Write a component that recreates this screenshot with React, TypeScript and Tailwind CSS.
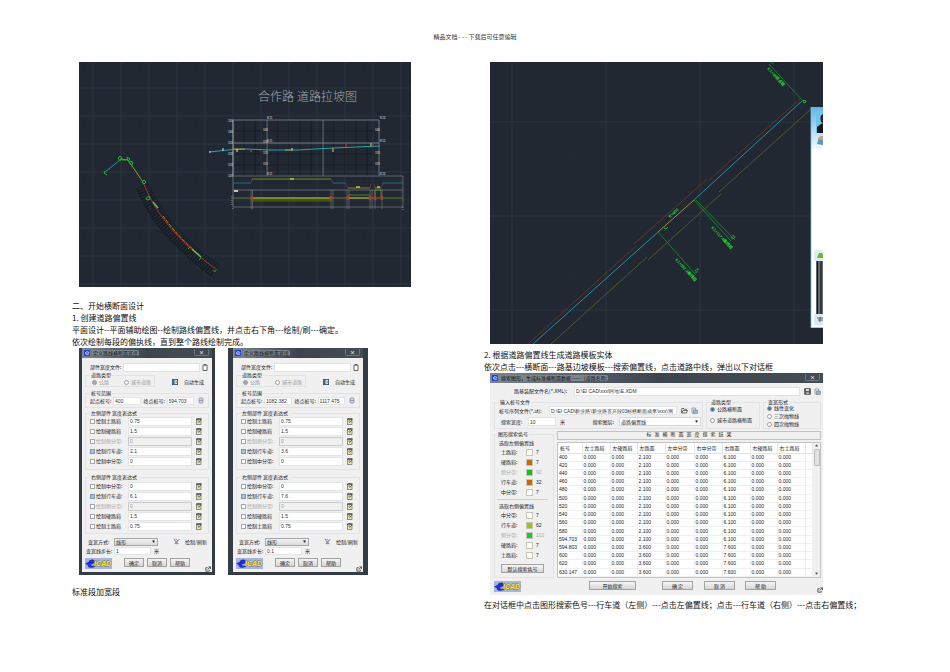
import { useId } from "react";
import type { ReactNode } from "react";

type Part = { label: string; value: string; checked?: boolean; disabled?: boolean };

type WidthSettings = {
  name: string;
  start: string;
  end: string;
  step: string;
  left: Part[];
  right: Part[];
  wideFrame?: boolean;
};

const standardSection: WidthSettings = {
  name: "standard",
  start: "400",
  end: "594.703",
  step: "1",
  left: [
    { label: "绘制土路肩", value: "0.75" },
    { label: "绘制硬路肩", value: "1.5" },
    { label: "绘制侧分带:", value: "0", disabled: true },
    { label: "绘制行车道:", value: "2.1", checked: true },
    { label: "绘制中分带:", value: "0" },
  ],
  right: [
    { label: "绘制中分带:", value: "0" },
    { label: "绘制行车道:", value: "6.1", checked: true },
    { label: "绘制侧分带:", value: "0", disabled: true },
    { label: "绘制硬路肩", value: "1.5" },
    { label: "绘制土路肩", value: "0.75" },
  ],
};

const widenedSection: WidthSettings = {
  name: "widened",
  start: "1082.382",
  end: "1117.475",
  step: "0.1",
  wideFrame: true,
  left: [
    { label: "绘制土路肩", value: "0.75" },
    { label: "绘制硬路肩", value: "1.5" },
    { label: "绘制侧分带:", value: "0", disabled: true },
    { label: "绘制行车道:", value: "3.6", checked: true },
    { label: "绘制中分带:", value: "0" },
  ],
  right: [
    { label: "绘制中分带:", value: "0" },
    { label: "绘制行车道:", value: "7.6", checked: true },
    { label: "绘制侧分带:", value: "0", disabled: true },
    { label: "绘制硬路肩", value: "1.5" },
    { label: "绘制土路肩", value: "0.75" },
  ],
};

const resultColumns = [
  { label: "桩号", width: "w-[24px]" },
  { label: "左土路肩", width: "w-[28px]" },
  { label: "左硬路肩", width: "w-[27px]" },
  { label: "左路面", width: "w-[28px]" },
  { label: "左中分带", width: "w-[29px]" },
  { label: "右中分带", width: "w-[28px]" },
  { label: "右路面", width: "w-[28px]" },
  { label: "右硬路肩", width: "w-[27px]" },
  { label: "右土路肩", width: "w-[28px]" },
  { label: "", width: "" },
];

const stations = [
  "400",
  "420",
  "440",
  "460",
  "480",
  "500",
  "520",
  "540",
  "560",
  "580",
  "594.703",
  "594.803",
  "600",
  "620",
  "630.147",
];

const resultRows = stations.map((station, i) => {
  const leftLane = i < 11 ? "2.100" : "3.600";
  const rightLane = i < 11 ? "6.100" : "7.600";
  return [station, "0.000", "0.000", leftLane, "0.000", "0.000", rightLane, "0.000", "0.000", ""];
});

const leftColours = [
  { label: "土路肩:", colour: "bg-white", index: "7" },
  { label: "硬路肩:", colour: "bg-[#c8690c]", index: "7" },
  { label: "侧分带:", colour: "bg-[#12c312]", index: "92", disabled: true },
  { label: "行车道:", colour: "bg-[#c8690c]", index: "32" },
  { label: "中分带:", colour: "bg-white", index: "7" },
];

const rightColours = [
  { label: "中分带:", colour: "bg-white", index: "7" },
  { label: "行车道:", colour: "bg-[#98c80f]", index: "62" },
  { label: "侧分带:", colour: "bg-[#10cc3c]", index: "102", disabled: true },
  { label: "硬路肩:", colour: "bg-white", index: "7" },
  { label: "土路肩:", colour: "bg-white", index: "7" },
];

const steps = (from: number, to: number, by: number) => {
  const out: number[] = [];
  for (let n = from; n <= to; n += by) out.push(n);
  return out;
};

function CadGrid({
  width,
  height,
  x,
  y,
  pitch,
}: {
  width: number;
  height: number;
  x: number;
  y: number;
  pitch: number;
}) {
  const minor = pitch / 5;
  return (
    <>
      <rect width={width} height={height} fill="#212832" />
      <g stroke="#252c37" strokeWidth="0.6">
        {steps(x - pitch, width, minor).map((n) => (
          <path key={n} d={`M${n} 0V${height}`} />
        ))}
        {steps(y - pitch, height, minor).map((n) => (
          <path key={n} d={`M0 ${n}H${width}`} />
        ))}
      </g>
      <g stroke="#2d3542" strokeWidth="0.9">
        {steps(x, width, pitch).map((n) => (
          <path key={n} d={`M${n} 0V${height}`} />
        ))}
        {steps(y, height, pitch).map((n) => (
          <path key={n} d={`M0 ${n}H${width}`} />
        ))}
      </g>
    </>
  );
}

function ProfileDrawing() {
  const road = "M64 120C76 150 96 177 138 208";
  return (
    <svg viewBox="0 0 332 225" className="block w-full" role="img" aria-label="合作路 道路拉坡图" fill="none">
      <CadGrid width={332} height={225} x={14} y={26} pitch={28} />
      <g fill="#a3a8ae" fontSize="12" fontWeight="300" fontFamily="'Noto Sans CJK SC', sans-serif">
        <text x="179" y="39">合作路</text>
        <text x="218" y="39">道路拉坡图</text>
      </g>

      {/* plan view of the road */}
      <path d="M26 110L41 98" stroke="#2794a0" />
      <path d="M41 97L49 98L64 120" stroke="#8f9a35" />
      <path d="M63 124C75 154 95 178 136 210" stroke="#11161c" strokeWidth="12" strokeDasharray="1.2 1.6" opacity="0.75" />
      <path d="M58 127C71 158 92 184 133 214M68 119C80 146 100 174 141 204" stroke="#12171d" strokeWidth="0.7" />
      <path d={road} stroke="#a83225" strokeWidth="1" />
      <path d="M84 154C92 165 102 177 115 188" stroke="#c47724" strokeWidth="1" strokeDasharray="4 1" />
      <path d="M74 140L79 146M113 187L122 195" stroke="#68b457" strokeWidth="1.6" />
      <g stroke="#13ba26" strokeWidth="1">
        <path d="M26 109L25 111L28 113M39 96L41 94L43 96L41 99ZM43 98H47M48 95L51 97L49 99ZM51 99L54 100L53 103L50 101ZM63 120L65 118L67 120L65 122ZM67 136L70 134L71 137L68 138ZM109 187L111 185M120 198L122 196M134 209L137 209" />
      </g>

      {/* longitudinal profile */}
      <g stroke="#12181e" strokeWidth="0.7">
        {steps(165, 299, 11.2).map((n) => (
          <path key={n} d={`M${n} 59V114`} />
        ))}
        <path d="M155 69H300M155 92H300M155 103H300" />
      </g>
      <g stroke="#737a82" strokeWidth="0.9">
        <path d="M154 58H300V114M188 58V114M244 58V114" />
        <path d="M154 81H300" strokeWidth="1.4" opacity="0.7" />
        <path d="M154 58V114" strokeWidth="1.7" />
        <path d="M154 114H324V145H154ZM154 128H324" opacity="0.8" />
        <path d="M172 128V147M173.500 128V147M252 128V147M254 128V147M268 128V147M270 128V147M291 128V147M293 128V147M296 128V147M303 128V147" opacity="0.7" />
      </g>
      <path d="M130 90L154 87.500L168 87L191 88H218L254 86L301 84" stroke="#23a5ad" strokeWidth="1" />
      <path d="M154 87H166M206 88H214" stroke="#a9a337" strokeWidth="1" />
      <g fill="#a9afb5" fontSize="3" fontWeight="700" fontFamily="'Liberation Sans', sans-serif">
        <text x="149" y="60">320</text>
        <text x="149" y="71">340</text>
        <text x="149" y="82">330</text>
        <text x="149" y="93">335</text>
        <text x="149" y="104">330</text>
        <text x="149" y="115">320</text>
        <text x="184" y="69">340</text>
        <text x="184" y="81">330</text>
        <text x="184" y="92">335</text>
        <text x="184" y="103">330</text>
        <text x="296" y="69">340</text>
        <text x="296" y="92">335</text>
        <text x="296" y="103">330</text>
        <text x="188" y="57">K11</text>
        <text x="188" y="80">K11</text>
        <text x="188" y="113">K11</text>
        <text x="301" y="57">K12</text>
        <text x="301" y="80">K12</text>
        <text x="301" y="113">K12</text>
      </g>
      <path d="M130 90H132M144 86V89M158 87V90M213 86V88" stroke="#c9cdd0" strokeWidth="1.2" />
      <path d="M171 89H173M267 82V85M294 81V84" stroke="#bb2e35" strokeWidth="1.4" />
      <path d="M254 86V90M292 81V84" stroke="#c2bb2b" strokeWidth="1.2" />
      <path d="M154 121H172M254 121H267M303 121H324" stroke="#1d8790" strokeWidth="0.8" />
      <path d="M172 121L173 117M254 121L252 117M267 122L269 126M292 122L291 126M295 122L296 126M304 122L302 126" stroke="#8e2c68" strokeWidth="0.7" />
      <path d="M173 117H252M269 126H291M296 126H302" stroke="#8a8c26" strokeWidth="0.9" />
      <path d="M211 117H215M277 125H281M298 125H301" stroke="#c5c529" strokeWidth="1.6" />
      <path d="M154 136H324" stroke="#6b9328" strokeWidth="0.8" />
      <path d="M173 137H252V139H173Z" fill="#33430f" stroke="#61851e" strokeWidth="0.6" />
      <path d="M173 136H252M269 136H291" stroke="#b2b338" strokeWidth="1" />
      <path d="M269 133H291M296 136V128H302V136" stroke="#5a9420" strokeWidth="0.8" />
      <path d="M173 134V138M252 134V138M269 134V138M291 134V138M296 134V138M303 134V138" stroke="#b7352c" strokeWidth="2.4" />
      <path d="M155 129H159" stroke="#fff" strokeWidth="1.4" />
      <path d="M153 134V143M154 146V148M324 145V148" stroke="#888e94" strokeWidth="1" strokeDasharray="1 1" />
    </svg>
  );
}

function OffsetDrawing() {
  return (
    <svg viewBox="0 0 333 282" className="block w-full" role="img" aria-label="道路偏置线" fill="none">
      <defs>
        <linearGradient id="sky" x1="0" y1="0" x2="0" y2="1">
          <stop offset="0" stopColor="#5fb4e8" />
          <stop offset="1" stopColor="#f4fafe" />
        </linearGradient>
      </defs>
      <CadGrid width={333} height={282} x={22} y={60} pitch={94} />
      <path d="M311 36L218 119M217 117L144 182M146 184L38 282" stroke="#6f3a2c" strokeWidth="0.8" />
      <path d="M321 47L229 130M231 132L158 198M157 195L61 282" stroke="#59642a" strokeWidth="0.8" />
      <path d="M313 38L204 138M168 170L43 282" stroke="#2390a0" strokeWidth="1" />
      <path d="M204 138L168 170" stroke="#a18c3e" strokeWidth="1" />
      <path d="M279 2L313 39M204 138L241 179M206 138L245 178M168 170L206 213M280 0L284 2" stroke="#17842b" strokeWidth="0.9" />
      <g stroke="#20b52f" strokeWidth="1">
        <path d="M313 39L315 38L316 40L314 41Z" />
        <path d="M174 166L176 167L178 165" />
      </g>
      <g fill="#1fd035" fontSize="4" fontWeight="700" fontFamily="'Liberation Sans', 'Noto Sans CJK SC', sans-serif">
        <text transform="translate(180 156) rotate(-42)">R=650</text>
        <text transform="translate(277 7) rotate(47)">
          K1+48<tspan fontWeight="900">终点桩</tspan>
        </text>
        <text transform="translate(221 166) rotate(47)">
          K1+117.4<tspan fontWeight="900">曲线段</tspan>
        </text>
        <text transform="translate(185 198) rotate(47)">
          K1+082.3<tspan fontWeight="900">曲线段</tspan>
        </text>
        <text transform="translate(242 178) rotate(-42)">YZ</text>
        <text transform="translate(206 211) rotate(-42)">ZY</text>
      </g>

      {/* chat window docked at the right edge */}
      <rect x="321" y="45" width="12" height="221" fill="#fff" />
      <rect x="321" y="45" width="12" height="42" fill="url(#sky)" />
      <path d="M321 45V265.500H333" stroke="#7fc0dc" strokeWidth="0.8" />
      <rect x="326" y="49" width="7" height="22" fill="#69c4ee" />
      <path d="M327 71V65L331 62L333 61V71Z" fill="#15181c" />
      <path d="M333 52C330 53 330 57 331 60L333 61Z" fill="#30241f" />
      <path d="M327 82L329 75L333 74V83Z" fill="#5c96cf" />
      <path d="M328 77L331 74L333 75V78Z" fill="#e5a35b" />
      <rect x="324" y="188" width="9" height="11" fill="#dcedf5" />
      <path d="M327 196L329 191H332L333 193V196Z" fill="#73b731" />
      <rect x="326" y="199" width="7" height="53" fill="#6a6e73" />
      <path d="M327.500 199V252M331 199V252" stroke="#15181b" strokeWidth="1.2" />
      <rect x="324" y="252" width="9" height="11" fill="#d9ebf4" />
      <path d="M327 256H333M328 258H333M330 255V260" stroke="#4b5157" strokeWidth="0.9" />
    </svg>
  );
}

function AppLogo() {
  return (
    <svg viewBox="0 0 27 11" className="h-[11px] w-[27px]" role="img" aria-label="EICAD">
      <rect width="27" height="11" fill="#aab4da" />
      <path d="M0 5.500L3.500 4C4 1 9.500 0.500 9.500 3.500C9.500 6 6.500 6.500 5.500 6.500C6 8 8 8 10 7.500V9C6 10.500 3 10 2.500 7Z" fill="#1c2ed4" />
      <text
        x="9"
        y="8"
        fontSize="7"
        fontWeight="700"
        fontStyle="italic"
        fontFamily="'Liberation Sans', sans-serif"
        fill="#fdf02a"
        stroke="#6c6a52"
        strokeWidth="0.8"
        paintOrder="stroke"
      >
        ICAD
      </text>
    </svg>
  );
}

function EMark() {
  return (
    <svg viewBox="0 0 6 6" className="size-[6px] shrink-0" aria-hidden="true">
      <rect width="6" height="6" rx="1" fill="#1f3cf0" />
      <path d="M1 3H5C5 1 1.500 1 1.500 3C1.500 5 4 5 5 4" stroke="#dfe5ff" strokeWidth="0.7" fill="none" />
    </svg>
  );
}

function PickIcon() {
  return (
    <svg viewBox="0 0 6 7" className="h-[7px] w-[6px]" aria-hidden="true">
      <rect x="0.500" y="1" width="4.500" height="5.500" fill="#e9e7b5" stroke="#4a514c" strokeWidth="0.6" />
      <path d="M0.500 1H5.500" stroke="#222" strokeWidth="1" />
      <path d="M4.800 2L2.500 4.800M1.500 3H3" stroke="#333" strokeWidth="0.7" />
    </svg>
  );
}

function PageIcon() {
  return (
    <svg viewBox="0 0 6 7" className="h-[7px] w-[6px]" aria-hidden="true">
      <path d="M1 1H5V6.500H1Z" fill="#fafafa" stroke="#444" strokeWidth="0.8" />
      <path d="M2 0.800H4" stroke="#444" />
    </svg>
  );
}

function ArchiveIcon() {
  return (
    <svg viewBox="0 0 6 7" className="h-[7px] w-[6px]" aria-hidden="true">
      <path d="M1 1.500C2 0.500 4 0.500 5 1.500V5.500C4 6.500 2 6.500 1 5.500Z" fill="#d0d2e5" stroke="#8485a4" strokeWidth="0.7" />
      <path d="M1 3.500H5" stroke="#8485a4" strokeWidth="0.7" />
    </svg>
  );
}

function AutoIcon() {
  return (
    <svg viewBox="0 0 7 7" className="size-[6px]" aria-hidden="true">
      <rect x="0.500" y="0.500" width="6" height="6" fill="#dbe6f0" stroke="#35506e" />
      <path d="M1 1H3V6H1Z" fill="#3d6c9d" />
      <path d="M4 2L5.500 3.500L4 5" stroke="#b3731d" fill="none" />
    </svg>
  );
}

function BrushIcon() {
  return (
    <svg viewBox="0 0 8 8" className="size-[7px]" aria-hidden="true">
      <path d="M1 1L4 5M4 5L7 1.500M3 1L5 3" stroke="#4a53c4" strokeWidth="0.9" />
      <path d="M2 6L4 4.500L6 6.500H3Z" fill="#b0ad4a" stroke="#555" strokeWidth="0.5" />
    </svg>
  );
}

function CornerIcon() {
  return (
    <svg viewBox="0 0 7 7" className="size-[6px]" aria-hidden="true">
      <path d="M3 2H1V6H5V4.500M3 4L6 1.500M4 1H6.500V3.500" stroke="#333" strokeWidth="0.9" fill="none" />
    </svg>
  );
}

function SaveIcon() {
  return (
    <svg viewBox="0 0 7 7" className="size-[7px]" aria-hidden="true">
      <rect x="0.700" y="0.700" width="5.600" height="5.600" fill="#5c5c52" stroke="#333" strokeWidth="0.6" />
      <rect x="2" y="1" width="3" height="2" fill="#d8d8d0" />
      <rect x="2" y="4.200" width="3" height="2" fill="#aaa" />
    </svg>
  );
}

function LockIcon() {
  return (
    <svg viewBox="0 0 7 7" className="size-[7px]" aria-hidden="true">
      <path d="M1 1H4.500V6H1Z" fill="#e8edf2" stroke="#7b8794" strokeWidth="0.7" />
      <rect x="2.500" y="3" width="4" height="3.500" fill="#9fb0c2" stroke="#677687" strokeWidth="0.5" />
    </svg>
  );
}

function OpenIcon() {
  return (
    <svg viewBox="0 0 7 7" className="size-[7px]" aria-hidden="true">
      <path d="M0.700 6V1.500H3L3.500 2.300H5.500V3.500M0.700 6L2 3.500H6.500L5.500 6Z" fill="#e7e7dd" stroke="#444" strokeWidth="0.7" />
    </svg>
  );
}

function TitleBar({ title }: { title: string }) {
  return (
    <header className="flex h-[10px] items-center bg-linear-to-r from-[#7d868d] via-[#3c454d] to-[#454d54] pl-[2px] text-[#0b0f13]">
      <EMark />
      <span className="ml-[2px] rounded-[2px] bg-[#7d868d] px-[1px] whitespace-nowrap">{title}</span>
      <button
        type="button"
        aria-label="关闭"
        className="mr-[3px] mb-[2px] ml-auto h-[7px] w-[15px] rounded-b-[2px] border border-t-0 border-[#6d757c] text-center leading-[5px] font-bold text-[#eef0f1]"
      >
        ×
      </button>
    </header>
  );
}

function PushButton({ children, className }: { children: ReactNode; className: string }) {
  return (
    <button
      type="button"
      className={`h-[9px] border border-[#a2a2a2] bg-linear-to-b from-[#f5f5f5] to-[#d6d6d6] leading-[7px] whitespace-nowrap ${className}`}
    >
      {children}
    </button>
  );
}

function Radio({
  name,
  label,
  checked,
  disabled,
}: {
  name: string;
  label: string;
  checked?: boolean;
  disabled?: boolean;
}) {
  return (
    <label className={`flex items-center gap-[2px] whitespace-nowrap ${disabled ? "text-[#999]" : ""}`}>
      <input
        type="radio"
        name={name}
        defaultChecked={checked}
        disabled={disabled}
        className="size-[5px] appearance-none rounded-full border border-[#9a9fa4] bg-white checked:bg-[#39779c] disabled:checked:bg-[#aaa]"
      />
      {label}
    </label>
  );
}

const fieldClass = "block border border-[#e2e4e6] bg-white px-[1px] leading-[6px] font-[Liberation_Sans] text-[#333]";

function PartRow({ part }: { part: Part }) {
  const id = useId();
  const tone = part.disabled ? "text-[#a8a8a8]" : "";
  return (
    <div className="flex h-[10px] items-center">
      <label htmlFor={id} className={`flex w-[38px] shrink-0 items-center gap-[1px] whitespace-nowrap ${tone}`}>
        <input
          type="checkbox"
          id={id}
          defaultChecked={part.checked}
          disabled={part.disabled}
          className="peer size-[5px] shrink-0 appearance-none border border-[#a3a7ab] bg-white checked:border-[#7f95b8] checked:bg-[#a9bfe0]"
        />
        {part.label}
      </label>
      <input
        type="text"
        aria-label={part.label}
        defaultValue={part.value}
        disabled={part.disabled}
        className={`${fieldClass} h-[9px] w-0 grow disabled:border-[#c9c9c9] disabled:bg-[#f0f0f0] disabled:text-[#999]`}
      />
      <button type="button" aria-label="编辑" className="ml-[4px]">
        <PickIcon />
      </button>
    </div>
  );
}

const groupClass = "min-w-0 border border-[#e1e3e5]";
const legendClass = "h-[6px] px-[1px] leading-[6px] whitespace-nowrap";

function WidthDialog({ settings }: { settings: WidthSettings }) {
  const id = useId();
  return (
    <section
      className={`flex flex-col bg-[#343d45] pb-[3px] text-[5px] leading-[6px] text-[#222] ${
        settings.wideFrame ? "w-[140px] px-[5px]" : "w-[136px] px-[3px]"
      }`}
    >
      <TitleBar title="定义路线横断面宽度" />
      <form className="bg-[#f0f0f0] px-[3px] pt-[4px]">
        <div className="flex h-[10px] items-center pl-[5px]">
          <label htmlFor={`${id}-file`} className="w-[33px] whitespace-nowrap">
            部件宽度文件:
          </label>
          <input id={`${id}-file`} type="text" className={`${fieldClass} h-[9px] w-0 grow`} />
          <button type="button" aria-label="选择文件" className="mr-[1px] ml-[2px]">
            <PageIcon />
          </button>
        </div>
        <div className="flex">
          <fieldset className={`${groupClass} flex h-[15px] w-[70px] pl-[4px]`}>
            <legend className={legendClass}>道路类型</legend>
            <div className="flex h-[8px] items-center gap-[15px] pl-[2px]">
              <Radio name={`${settings.name}-road`} label="公路" checked disabled />
              <Radio name={`${settings.name}-road`} label="城市道路" disabled />
            </div>
          </fieldset>
          <button type="button" className="mt-[6px] ml-auto flex h-[8px] items-center gap-[6px] pr-[5px] whitespace-nowrap">
            <AutoIcon />
            自动生成
          </button>
        </div>
        <fieldset className={`${groupClass} mt-[3px] pb-[2px] pl-[4px]`}>
          <legend className={legendClass}>桩号范围</legend>
          <div className="flex h-[9px] items-center">
            <label htmlFor={`${id}-start`} className="w-[23px] whitespace-nowrap">
              起点桩号:
            </label>
            <input id={`${id}-start`} type="text" defaultValue={settings.start} className={`${fieldClass} h-[8px] w-0 grow`} />
            <label htmlFor={`${id}-end`} className="ml-[3px] w-[23px] whitespace-nowrap">
              终点桩号:
            </label>
            <input id={`${id}-end`} type="text" defaultValue={settings.end} className={`${fieldClass} h-[8px] w-0 grow`} />
            <button type="button" aria-label="读取桩号" className="mx-[4px]">
              <ArchiveIcon />
            </button>
          </div>
        </fieldset>
        <fieldset className={`${groupClass} mt-[2px] pr-[6px] pb-[3px] pl-[4px]`}>
          <legend className={legendClass}>左侧部件 宽度表达式</legend>
          {settings.left.map((part) => (
            <PartRow key={part.label} part={part} />
          ))}
        </fieldset>
        <fieldset className={`${groupClass} mt-[4px] pt-[1px] pr-[6px] pb-[2px] pl-[4px]`}>
          <legend className={legendClass}>右侧部件 宽度表达式</legend>
          {settings.right.map((part) => (
            <PartRow key={part.label} part={part} />
          ))}
        </fieldset>
        <div className="mt-[3px] flex h-[9px] items-center pl-[3px]">
          <label htmlFor={`${id}-mode`} className="w-[26px] whitespace-nowrap">
            变宽方式:
          </label>
          <select
            id={`${id}-mode`}
            className="h-[8px] w-[44px] appearance-none border border-[#a5a8ab] bg-linear-to-b from-[#f3f3f3] to-[#dadada] px-[1px] leading-[6px]"
          >
            <option>线形</option>
          </select>
          <span aria-hidden="true" className="-ml-[6px] text-[3px]">▼</span>
          <button type="button" className="ml-auto flex items-center gap-[5px] pr-[2px] whitespace-nowrap">
            <BrushIcon />
            绘制/刷新
          </button>
        </div>
        <div className="flex h-[9px] items-center pl-[1px]">
          <label htmlFor={`${id}-step`} className="w-[28px] whitespace-nowrap">
            变宽线步长:
          </label>
          <input id={`${id}-step`} type="text" defaultValue={settings.step} className={`${fieldClass} h-[8px] w-[37px]`} />
          <span className="ml-[3px]">米</span>
        </div>
        <div className="mt-[3px] flex h-[14px] items-start">
          <AppLogo />
          <div className="ml-auto flex gap-[3px]">
            <PushButton className="w-[20px]">确定</PushButton>
            <PushButton className="w-[20px]">取消</PushButton>
            <PushButton className="w-[20px]">帮助</PushButton>
          </div>
          <button type="button" aria-label="收起" className="-mr-[2px] ml-[15px] self-end">
            <CornerIcon />
          </button>
        </div>
      </form>
    </section>
  );
}

function ColourRows({ rows }: { rows: typeof leftColours }) {
  return (
    <ul>
      {rows.map((row) => (
        <li key={row.label} className={`flex h-[10px] items-center pl-[4px] ${row.disabled ? "text-[#aaa]" : ""}`}>
          <span className="w-[25px]">{row.label}</span>
          <button type="button" aria-label={`${row.label}颜色`} className={`size-[7px] border border-[#c5c5ba] ${row.colour}`} />
          <span className="ml-[3px] font-[Liberation_Sans]">{row.index}</span>
        </li>
      ))}
    </ul>
  );
}

function SearchDialog() {
  return (
    <section className="bg-[#f0f0f0] text-[5px] leading-[6px] text-[#222]">
      <TitleBar title="搜索图形，生成标准横断面数据 -----（道路名称:" />
      <form className="pr-[2px] pl-[4px]">
        <div className="flex h-[16px] items-center pl-[20px]">
          <label htmlFor="assembly" className="w-[60px] whitespace-nowrap">
            路基装配文件名(*.XML):
          </label>
          <input
            id="assembly"
            type="text"
            defaultValue="D:\EI CAD\xxx\阿地\E.XDM"
            className={`${fieldClass} h-[9px] w-0 grow`}
          />
          <div className="ml-[4px] flex gap-[3px]">
            <button type="button" aria-label="保存">
              <SaveIcon />
            </button>
            <button type="button" aria-label="锁定">
              <LockIcon />
            </button>
          </div>
        </div>

        <div className="flex gap-[3px]">
          <fieldset className={`${groupClass} h-[30px] grow pl-[4px]`}>
            <legend className={legendClass}>输入桩号文件</legend>
            <div className="flex h-[11px] items-center">
              <label htmlFor="stations" className="w-[50px] whitespace-nowrap">
                桩号序列文件(*.st):
              </label>
              <input
                id="stations"
                type="text"
                defaultValue="D:\EI CAD\新业路\新业路首开段03标横断面成果\xxx\测"
                className={`${fieldClass} h-[9px] w-0 grow`}
              />
              <div className="mx-[4px] flex gap-[3px]">
                <button type="button" aria-label="打开">
                  <OpenIcon />
                </button>
                <button type="button" aria-label="编辑桩号">
                  <LockIcon />
                </button>
              </div>
            </div>
            <div className="flex h-[11px] items-center pl-[2px]">
              <label htmlFor="range" className="w-[27px] whitespace-nowrap">
                搜索宽度:
              </label>
              <input id="range" type="text" defaultValue="10" className={`${fieldClass} h-[9px] w-[28px]`} />
              <span className="ml-[4px]">米</span>
              <label htmlFor="layer" className="mr-[5px] ml-auto whitespace-nowrap">
                搜索图层:
              </label>
              <select id="layer" className="h-[9px] w-[82px] appearance-none border border-[#d5d7da] bg-white px-[1px] leading-[6px]">
                <option>道路偏置线</option>
              </select>
              <span aria-hidden="true" className="mr-[4px] -ml-[6px] text-[3px]">▼</span>
            </div>
          </fieldset>
          <fieldset className={`${groupClass} h-[30px] w-[54px] pl-[3px]`}>
            <legend className={legendClass}>道路类型</legend>
            <div className="grid gap-[5px] pt-[1px]">
              <Radio name="section" label="公路横断面" checked />
              <Radio name="section" label="城市道路横断面" />
            </div>
          </fieldset>
          <fieldset className={`${groupClass} h-[30px] w-[58px] pl-[3px]`}>
            <legend className={legendClass}>变宽形式</legend>
            <div className="grid gap-[2px]">
              <Radio name="curve" label="线性变化" checked />
              <Radio name="curve" label="三次抛物线" />
              <Radio name="curve" label="四次抛物线" />
            </div>
          </fieldset>
        </div>

        <div className="mt-[2px] flex gap-[3px]">
          <fieldset className={`${groupClass} w-[60px] shrink-0 pl-[2px]`}>
            <legend className={legendClass}>图形搜索色号</legend>
            <h3 className="mt-[2px] pl-[2px] leading-[8px]">选取左侧偏置线</h3>
            <ColourRows rows={leftColours} />
            <h3 className="mt-[2px] mr-[5px] border-t border-[#cfcfcf] pt-[2px] pl-[2px] leading-[8px]">选取右侧偏置线</h3>
            <ColourRows rows={rightColours} />
            <PushButton className="mt-[4px] mb-[3px] ml-[4px] w-[43px]">默认搜索色号</PushButton>
          </fieldset>
          <div className="min-w-0 grow">
            <h3 className="h-[9px] border border-[#c2c2c2] text-center font-[Liberation_Mono,'Noto_Sans_CJK_SC'] leading-[7px]">
              标 准 横 断 面 宽 度 搜 索 结 果
            </h3>
            <div className="mt-[2px] flex border border-[#c2c5c8] bg-white">
              <table className="h-[134px] grow table-fixed border-collapse text-left">
                <thead>
                  <tr className="h-[10px]">
                    {resultColumns.map((column, i) => (
                      <th
                        key={i}
                        className={`border-r border-b border-[#e4e4e4] p-0 pl-[2px] font-normal whitespace-nowrap ${column.width}`}
                      >
                        {column.label}
                      </th>
                    ))}
                  </tr>
                </thead>
                <tbody className="font-[Liberation_Sans]">
                  {resultRows.map((row) => (
                    <tr key={row[0]}>
                      {row.map((cell, i) => (
                        <td key={i} className="border-r border-b border-[#f0f0f0] p-0 pl-[1px] leading-[7px]">
                          {cell}
                        </td>
                      ))}
                    </tr>
                  ))}
                </tbody>
              </table>
              <div className="flex w-[7px] flex-col items-center bg-[#f0f0f0] text-[3px] text-[#555]">
                <span aria-hidden="true">▲</span>
                <span className="h-[17px] w-[6px] rounded-[1px] border border-[#bdbdbd] bg-[#e2e2e2]" />
                <span aria-hidden="true" className="mt-auto">▼</span>
              </div>
            </div>
          </div>
        </div>

        <div className="flex h-[17px] items-start pt-[3px]">
          <AppLogo />
          <PushButton className="ml-[68px] w-[47px]">开始搜索</PushButton>
          <PushButton className="ml-[26px] w-[31px]">确 定</PushButton>
          <PushButton className="ml-[11px] w-[31px]">取 消</PushButton>
          <PushButton className="ml-[10px] w-[31px]">帮 助</PushButton>
          <button type="button" aria-label="收起" className="-mr-[2px] ml-auto self-end pb-[2px]">
            <CornerIcon />
          </button>
        </div>
      </form>
    </section>
  );
}

export default function App() {
  return (
    <div className="min-h-screen bg-white px-[72px] pt-[34px] pb-12 font-['Noto_Sans_CJK_SC',sans-serif] text-[8px] leading-[12px] text-[#111]">
      <header className="mb-[20px] text-center font-[Liberation_Mono,'Noto_Sans_CJK_SC',monospace] text-[6px] leading-[8px] text-[#333]">
        精品文档---下载后可任意编辑
      </header>
      <main className="grid grid-cols-2 items-start gap-[18px]">
        <article>
          <figure className="ml-[7px] max-w-[332px]">
            <ProfileDrawing />
          </figure>
          <h2 className="mt-[13px]">二、开始横断面设计</h2>
          <h3>1. 创建道路偏置线</h3>
          <p>平面设计--平面辅助绘图--绘制路线偏置线，并点击右下角---绘制/刷---确定。</p>
          <p>依次绘制每段的偏执线，直到整个路线绘制完成。</p>
          <div className="ml-[7px] flex items-stretch gap-[13px]">
            <WidthDialog settings={standardSection} />
            <WidthDialog settings={widenedSection} />
          </div>
          <p className="mt-[11px]">标准段加宽段</p>
        </article>
        <article>
          <figure className="ml-[6px] max-w-[333px]">
            <OffsetDrawing />
          </figure>
          <h3 className="mt-[5px]">2. 根据道路偏置线生成道路模板实体</h3>
          <p>依次点击---横断面---路基边坡模板---搜索偏置线，点击道路中线，弹出以下对话框</p>
          <div className="ml-[6px] max-w-[333px]">
            <SearchDialog />
          </div>
          <p className="mt-[4px]">在对话框中点击图形搜索色号---行车道（左侧）---点击左偏置线；点击---行车道（右侧）---点击右偏置线；</p>
        </article>
      </main>
    </div>
  );
}
